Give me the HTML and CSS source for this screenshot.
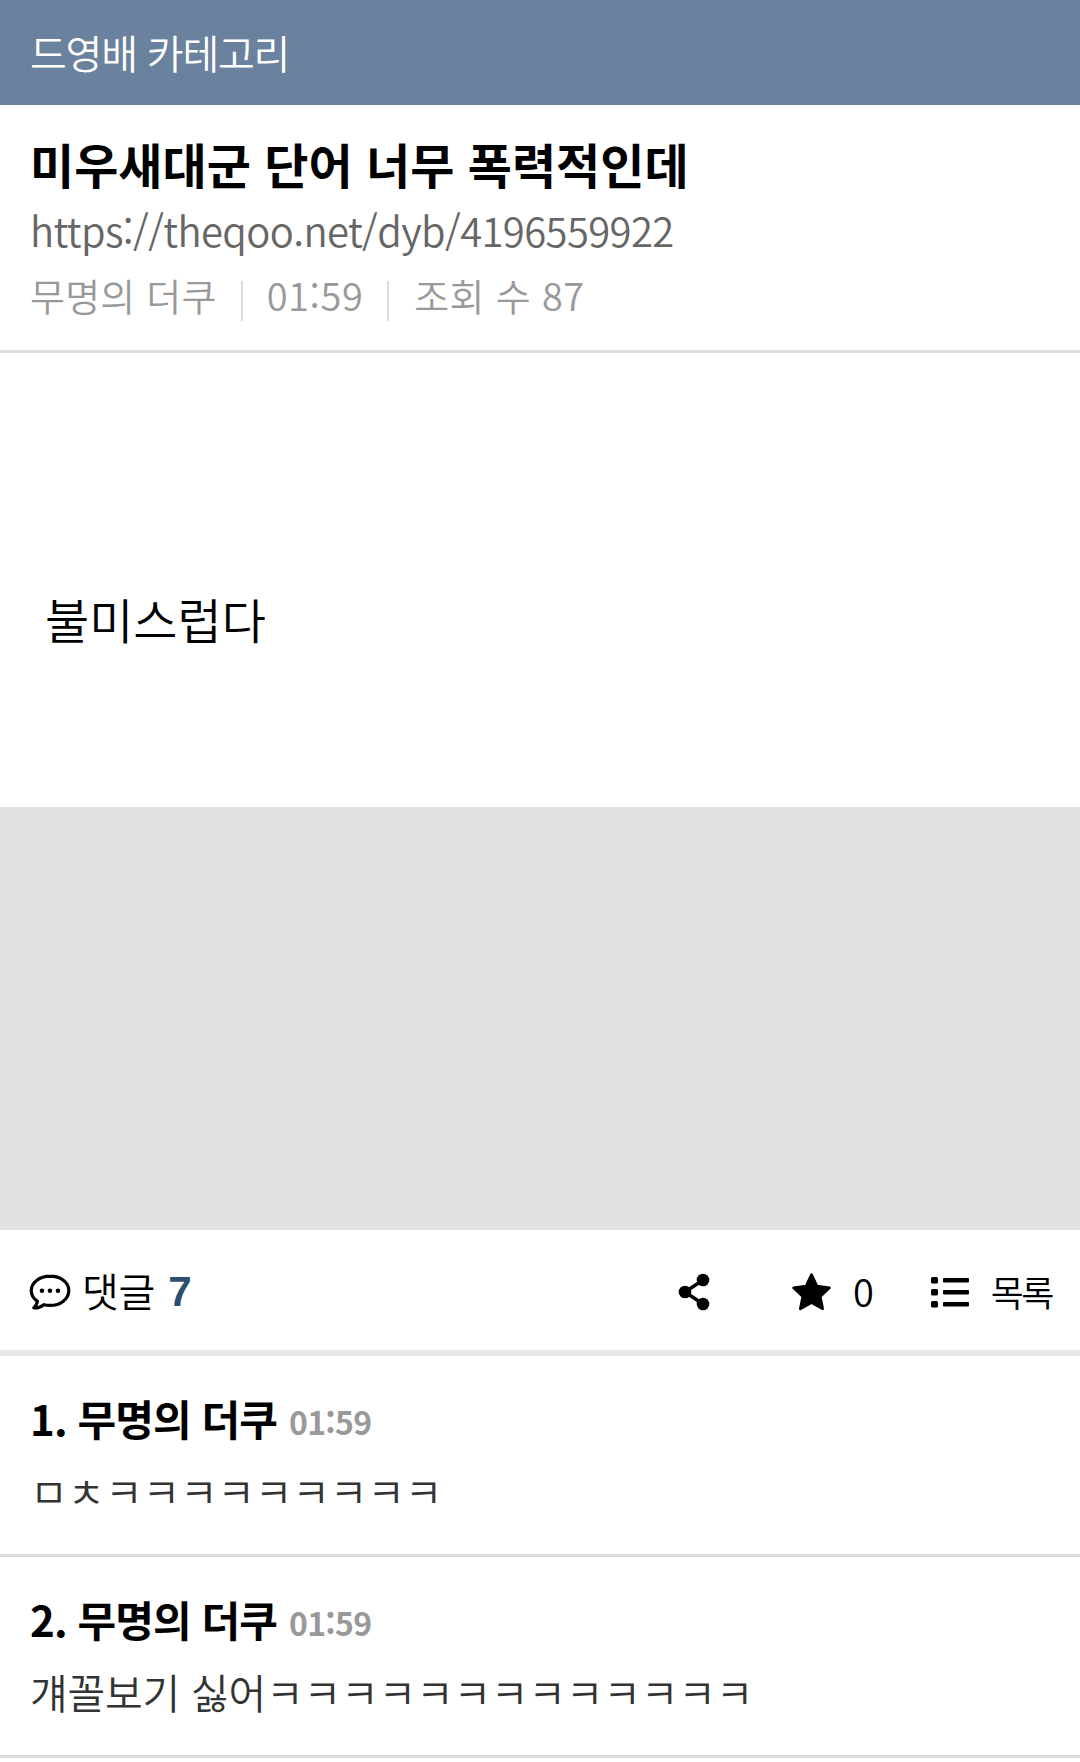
FILE: index.html

```html
<!DOCTYPE html>
<html lang="ko">
<head>
  <meta charset="UTF-8" />
  <meta name="viewport" content="width=device-width, initial-scale=1.0" />
  <title>미우새대군 단어 너무 폭력적인데</title>
  <link rel="stylesheet" href="styles.css">
</head>
<body>
  <header class="cate-bar">드영배 카테고리</header>
  <section class="post-head">
    <h1 class="post-title">미우새대군 단어 너무 폭력적인데</h1>
    <div class="post-url">https://theqoo.net/dyb/4196559922</div>
    <div class="post-meta">
      <span>무명의 더쿠</span>
      <i class="sep"></i>
      <span class="meta-time">01:59</span>
      <i class="sep"></i>
      <span class="meta-views">조회 수 87</span>
    </div>
  </section>
  <div class="post-body">불미스럽다</div>
  <div class="ad-box"></div>
  <div class="action-bar">
    <svg class="ico-talk" viewBox="0 0 42 36" width="42" height="36">
      <path d="M21 2.2C10.4 2.2 2.2 8.6 2.2 16.6c0 4.3 2.4 8.1 6.2 10.8-.4 2.6-1.9 5-3.6 6.6 3.6.1 7.6-1.3 10-3.3 2 .5 4 .7 6.2.7 10.600 0 18.800-6.400 18.800-14.800S31.600 2.200 21 2.200z" fill="none" stroke="#000" stroke-width="3.200" stroke-linejoin="round"/>
      <circle cx="13" cy="16.800" r="2.300"/>
      <circle cx="21" cy="16.800" r="2.300"/>
      <circle cx="29" cy="16.800" r="2.300"/>
    </svg>
    <span class="reply-label">댓글</span>
    <b class="reply-count">7</b>
    <svg class="ico-share" viewBox="0 0 32 38" width="32" height="38">
      <path d="M25 7 7 19l18 12" fill="none" stroke="#000" stroke-width="3.500"/>
      <circle cx="25" cy="7" r="6.300"/>
      <circle cx="7" cy="19" r="6.300"/>
      <circle cx="25" cy="31" r="6.300"/>
    </svg>
    <svg class="ico-star" viewBox="0 0 40 38" width="41" height="39">
      <path d="M20 2.500l5.300 11.300 12.200 1.600-9 8.400 2.400 12.100L20 29.900 9.100 35.900l2.400-12.100-9-8.400 12.200-1.600z" stroke="#000" stroke-width="2.600" stroke-linejoin="round"/>
    </svg>
    <span class="star-count">0</span>
    <svg class="ico-list" viewBox="0 0 38 32" width="38" height="32">
      <rect x="0" y="1" width="7" height="6.500" rx="1.500"/>
      <rect x="0" y="13" width="7" height="6.500" rx="1.500"/>
      <rect x="0" y="25" width="7" height="6.500" rx="1.500"/>
      <rect x="12" y="2" width="26" height="4.500" rx="1"/>
      <rect x="12" y="14" width="26" height="4.500" rx="1"/>
      <rect x="12" y="26" width="26" height="4.500" rx="1"/>
    </svg>
    <span class="list-label">목록</span>
  </div>
  <ul class="replies">
    <li class="reply">
      <div class="reply-head"><b>1. 무명의 더쿠</b> <span class="reply-time">01:59</span></div>
      <div class="reply-text">ㅁㅊㅋㅋㅋㅋㅋㅋㅋㅋㅋ</div>
    </li>
    <li class="reply">
      <div class="reply-head"><b>2. 무명의 더쿠</b> <span class="reply-time">01:59</span></div>
      <div class="reply-text">걔꼴보기 싫어ㅋㅋㅋㅋㅋㅋㅋㅋㅋㅋㅋㅋㅋ</div>
    </li>
  </ul>
</body>
</html>
```

FILE: styles.css

```css
* { box-sizing: border-box; }
html, body { margin: 0; padding: 0; }
body { font-family: "Noto Sans CJK KR", "Noto Sans", sans-serif; background: #fff; color: #000; width: 1080px; height: 1762px; overflow: hidden; }

.cate-bar { height: 105px; background: #6b829e; color: #fff; padding-left: 30px; font-size: 40px; font-weight: 350; line-height: 105px; letter-spacing: -1.2px; }

.post-head { height: 248px; padding: 23px 30px 0; border-bottom: 3px solid #ddd; }
.post-title { margin: 0; font-size: 48px; font-weight: 700; line-height: 70px; letter-spacing: 0; }
.post-url { margin-top: 1px; font-size: 40px; font-weight: 350; line-height: 62px; color: #666; letter-spacing: -.61px; }
.post-meta { display: flex; align-items: center; height: 66px; padding-top: 1px; font-size: 38px; font-weight: 350; color: #999; letter-spacing: .2px; }
.meta-time { margin-left: -1px; letter-spacing: .6px; }
.meta-views { letter-spacing: .3px; }
.sep { width: 2px; height: 40px; margin: 12px 25px 0 24px; background: #ddd; }

.post-body { height: 454px; padding: 230px 0 0 45px; font-size: 48px; line-height: 70px; font-weight: 350; letter-spacing: 0; }
.ad-box { height: 423px; background: #e1e1e1; }

.action-bar { display: flex; align-items: center; height: 126px; padding: 3px 28px 0 29px; border-bottom: 6px solid #e8e8e8; font-size: 40px; }
.action-bar svg { flex: none; }
.ico-talk { margin-right: 12px; }
.reply-label { margin: 0 0 3px -1px; font-weight: 350; letter-spacing: -.2px; }
.reply-count { margin-left: 13px; font-family: "Liberation Sans", sans-serif; color: #2f4f70; font-size: 42px; }
.ico-share { margin-left: auto; }
.ico-star { margin-left: 81px; }
.star-count { margin: 0 0 2px 21px; font-weight: 350; font-size: 38px; }
.ico-list { margin-left: 57px; }
.list-label { margin: 0 0 2px 22px; font-size: 36px; font-weight: 350; letter-spacing: -2.5px; }

.replies { list-style: none; margin: 0; padding: 0; }
.reply { height: 201px; padding: 30px 30px 0; border-bottom: 3px solid #ddd; }
.reply-head { font-size: 42px; line-height: 64px; letter-spacing: -.9px; }
.reply-time { margin-left: 1px; font-size: 32px; font-weight: 700; color: #999; letter-spacing: -.7px; vertical-align: 1px; }
.reply-text { margin-top: 7px; font-size: 41px; line-height: 60px; font-weight: 350; color: #333; letter-spacing: -.25px; }
```
